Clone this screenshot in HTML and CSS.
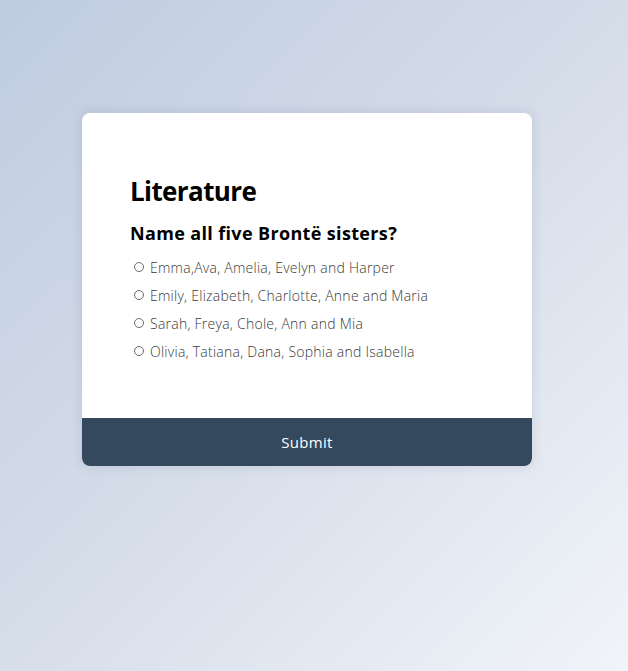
FILE: index.html
```html
<!DOCTYPE html>
<html lang="en">
<head>
<meta charset="utf-8">
<title>Quiz</title>
<link rel="stylesheet" href="styles.css">
</head>
<body>
<main class="page">
  <section class="card">
    <div class="content">
      <h1 class="title">Literature</h1>
      <h2 class="question">Name all five Brontë sisters?</h2>
      <ul class="answers">
        <li class="answer"><label><input type="radio" name="a" class="radio"><span>Emma,Ava, Amelia, Evelyn and Harper</span></label></li>
        <li class="answer"><label><input type="radio" name="a" class="radio"><span>Emily, Elizabeth, Charlotte, Anne and Maria</span></label></li>
        <li class="answer"><label><input type="radio" name="a" class="radio"><span>Sarah, Freya, Chole, Ann and Mia</span></label></li>
        <li class="answer"><label><input type="radio" name="a" class="radio"><span>Olivia, Tatiana, Dana, Sophia and Isabella</span></label></li>
      </ul>
    </div>
    <button class="submit" type="button">Submit</button>
  </section>
</main>
</body>
</html>
```
FILE: styles.css
```css
* { box-sizing: border-box; }
html, body { margin: 0; padding: 0; }
body {
  min-height: 671px;
  background: linear-gradient(135deg, #bfcce0 0%, #d3dbe8 45%, #f1f4f9 100%);
  font-family: "Open Sans", "DejaVu Sans", sans-serif;
}
.page {
  padding: 113px 0 0 82px;
}
.card {
  width: 450px;
  background: #fff;
  border-radius: 8px;
  overflow: hidden;
  box-shadow: 0 0 10px 2px rgba(100, 110, 140, 0.15);
}
.content {
  padding: 61px 48px 53px;
}
.title {
  margin: 0;
  font-size: 26px;
  font-weight: 700;
  line-height: 34px;
  letter-spacing: -0.6px;
  color: #000;
}
.question {
  margin: 13px 0 8px;
  font-size: 18px;
  font-weight: 700;
  line-height: 24px;
  letter-spacing: 0.35px;
  color: #000;
}
.answers {
  list-style: none;
  margin: 0;
  padding: 0;
}
.answer {
  height: 28px;
  display: flex;
  align-items: center;
}
.answer label {
  display: flex;
  align-items: center;
  font-size: 14px;
  font-weight: 300;
  letter-spacing: 0.25px;
  color: #3a3a3a;
}
.radio {
  appearance: none;
  width: 10px;
  height: 10px;
  margin: 0 6px 0 4px;
  border: 1px solid #6a6a6a;
  border-radius: 50%;
}
.submit {
  display: block;
  width: 100%;
  height: 48px;
  border: 0;
  margin: 0;
  background: #34495e;
  color: #fff;
  font-family: inherit;
  font-size: 15px;
  font-weight: 400;
  letter-spacing: 0.3px;
}
```
